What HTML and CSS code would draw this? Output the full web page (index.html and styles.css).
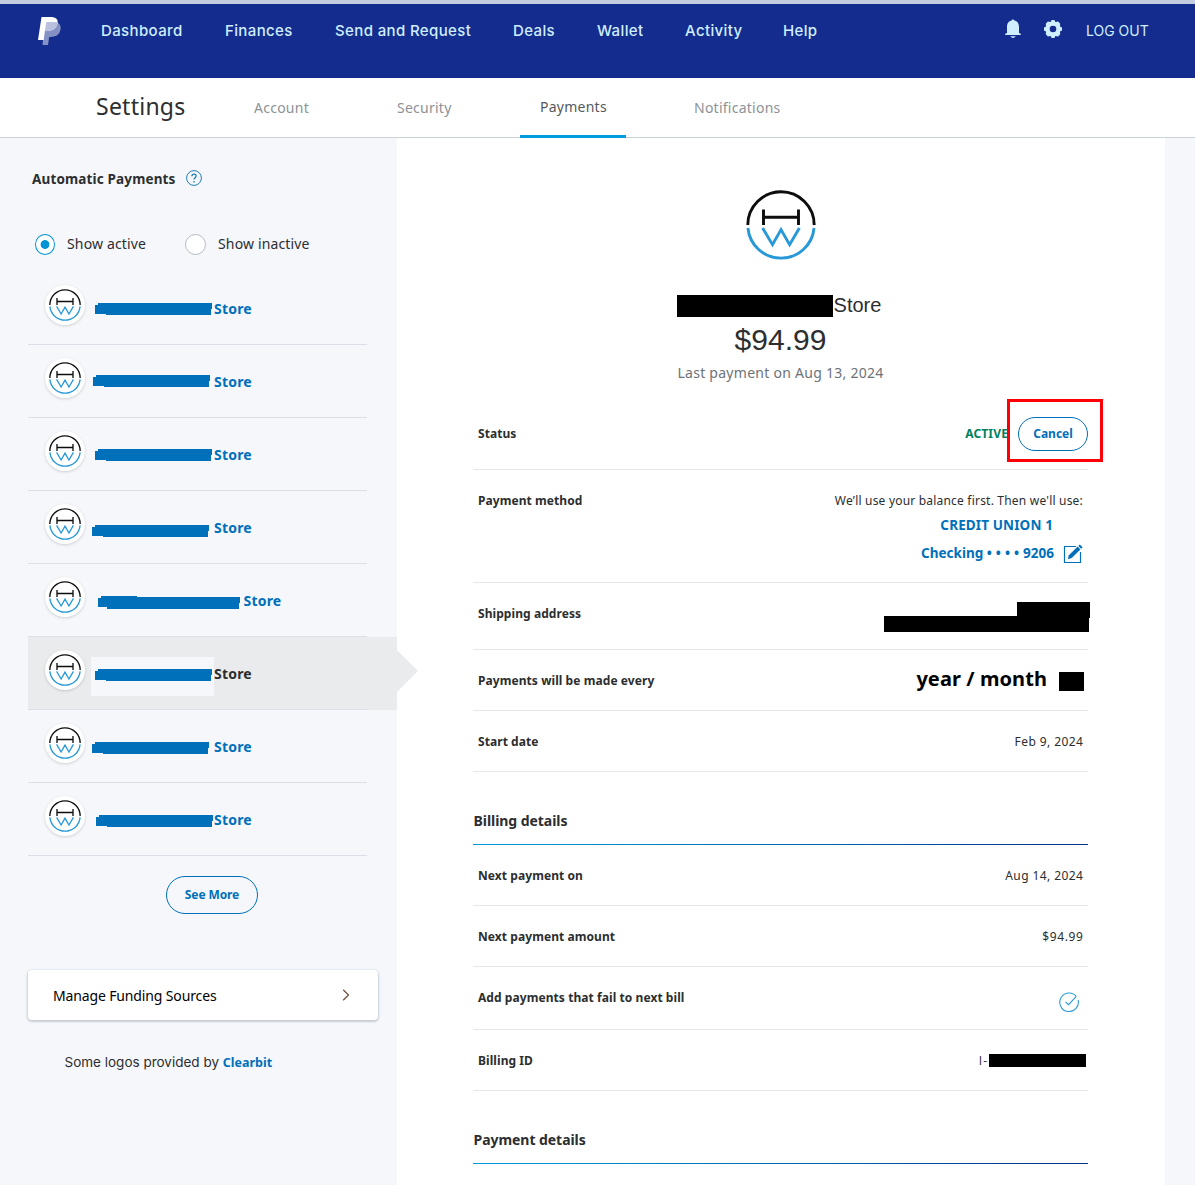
FILE: index.html
```
<!DOCTYPE html>
<html lang="en">
<head>
<meta charset="utf-8">
<title>Settings - Automatic Payments</title>
<link rel="stylesheet" href="styles.css">
</head>
<body>
<svg width="0" height="0" class="defs">
  <symbol id="hw" viewBox="0 0 70 70">
    <g fill="none" stroke-width="2.9">
      <path stroke="#0d0d0d" d="M1.800 35A33.200 33.200 0 0 1 68.200 35M17.500 19.500V35M52.500 19.500V35M17.500 27.300h35"/>
      <path stroke="#2798d8" d="M1.940 38A33.200 33.200 0 0 0 68.060 38M16.600 38l9.900 16.700L35 39.600l8.600 15.100L53.400 38"/>
    </g>
  </symbol>
</svg>

<header class="topbar">
  <svg class="brand" viewBox="0 0 23 28">
    <path fill="#8391c4" d="M6.500 5.500H19.200C22.600 7.500 23.300 10 22.200 13.700C21 18 17.600 19.900 12.500 19.900H11.200L10 28H4.500Z"/>
    <path fill="#fff" d="M3.500 0H12.300C18 0 20.600 2.600 19.500 6.600C18.200 12.200 14.500 14 9.300 14H6.900L5.700 23H0Z"/>
    <path fill="#b9c1df" d="M8.200 5H19.700C19.700 11 15 14 9.300 14H6.900Z"/>
  </svg>
  <nav class="main-nav">
    <a>Dashboard</a><a>Finances</a><a>Send and Request</a><a>Deals</a><a>Wallet</a><a>Activity</a><a>Help</a>
  </nav>
  <div class="tools">
    <svg class="bell" viewBox="0 0 16 20">
      <path fill="#cfefff" d="M7 1Q8-.5 9 1.200C12.600 2 14 4.600 14 8V14L15.800 14.800V16H.2V14.800L2 14V8C2 4.600 3.400 2 7 1.200Z"/>
      <path fill="#cfefff" d="M5.200 17.200h5.600Q8 20.800 5.200 17.200Z"/>
    </svg>
    <svg class="gear" viewBox="0 0 18 18">
      <path fill="#cfefff" fill-rule="evenodd" d="M7.600 0H10.400L11.400 1.900L14.200 1.600L16.200 3.700L16 6.600L18 7.600V10.400L16 11.400L16.200 14.300L14.200 16.400L11.400 16.100L10.400 18H7.600L6.600 16.100L3.800 16.400L1.800 14.300L2 11.400L0 10.400V7.600L2 6.600L1.800 3.700L3.800 1.600L6.600 1.900ZM9 5.700a3.300 3.300 0 1 0 0 6.600a3.300 3.300 0 0 0 0-6.600Z"/>
    </svg>
    <a class="logout">LOG OUT</a>
  </div>
</header>

<div class="subnav">
  <h1>Settings</h1>
  <a>Account</a>
  <a>Security</a>
  <a class="active">Payments</a>
  <a>Notifications</a>
</div>

<div class="page">
  <aside class="sidebar">
    <h2>Automatic Payments
      <svg class="help" viewBox="0 0 16 16"><g fill="none" stroke="#1f7eb3"><circle cx="8" cy="8" r="7.400"/><path stroke-width="1.300" d="M5.900 6.300C5.900 3.400 10.200 3.500 10.100 6C10 7.800 8 7.700 8 9.600M8 10.900v1.500"/></g></svg>
    </h2>
    <div class="filters">
      <label><span class="radio on"></span>Show active</label>
      <label><span class="radio"></span>Show inactive</label>
    </div>
    <ul class="merchants">
      <li><span class="avatar"><svg><use href="#hw"/></svg></span><i class="mask m1"></i><b>Store</b></li>
      <li><span class="avatar"><svg><use href="#hw"/></svg></span><i class="mask m2"></i><b>Store</b></li>
      <li><span class="avatar"><svg><use href="#hw"/></svg></span><i class="mask m1"></i><b>Store</b></li>
      <li><span class="avatar"><svg><use href="#hw"/></svg></span><i class="mask m4"></i><b>Store</b></li>
      <li class="long"><span class="avatar"><svg><use href="#hw"/></svg></span><i class="mask m5"></i><b>Store</b></li>
      <li class="selected"><span class="avatar"><svg><use href="#hw"/></svg></span><i class="patch"></i><i class="mask m6"></i><b>Store</b></li>
      <li><span class="avatar"><svg><use href="#hw"/></svg></span><i class="mask m7"></i><b>Store</b></li>
      <li><span class="avatar"><svg><use href="#hw"/></svg></span><i class="mask m8"></i><b>Store</b></li>
    </ul>
    <button class="pill see-more"><span>See More</span></button>
    <a class="funding"><span>Manage Funding Sources</span>
      <svg viewBox="0 0 8 12"><path d="M1.200.800L6.500 6L1.200 11.200" fill="none" stroke="#6b4d3c" stroke-width="1.200"/></svg>
    </a>
    <p class="credit"><span>Some logos provided by</span> <a>Clearbit</a></p>
  </aside>

  <main class="detail">
    <section class="summary">
      <svg class="big-logo"><use href="#hw"/></svg>
      <div class="name"><i></i>Store</div>
      <div class="amount">$94.99</div>
      <div class="last">Last payment on Aug 13, 2024</div>
    </section>
    <dl>
      <div class="row r-status"><dt>Status</dt><dd><span class="state">ACTIVE</span><button class="pill cancel"><span>Cancel</span></button><i class="highlight"></i></dd></div>
      <div class="row r-method"><dt>Payment method</dt>
        <dd>
          <span class="note">We’ll use your balance first. Then we'll use:</span>
          <a class="bank">CREDIT UNION 1</a>
          <div class="account"><a>Checking <span class="dots">••••</span>9206</a>
            <svg viewBox="0 0 20 20"><path d="M13 2.500H1.500V18.500H17.500V8" fill="none" stroke="#0070ba" stroke-width="1.200"/><path d="M4.800 15.200L5.900 11.300L14.600 2.600L17.400 5.400L8.700 14.100Z" fill="#0070ba"/><path d="M15.300 1.900L16.800.4L19.600 3.200L18.100 4.700Z" fill="#0070ba"/></svg>
          </div>
        </dd></div>
      <div class="row r-ship"><dt>Shipping address</dt><dd><i class="address"></i></dd></div>
      <div class="row"><dt>Payments will be made every</dt><dd class="cycle"><b>year / month</b><i></i></dd></div>
      <div class="row"><dt>Start date</dt><dd class="value">Feb 9, 2024</dd></div>
    </dl>
    <h3>Billing details</h3>
    <dl>
      <div class="row"><dt>Next payment on</dt><dd class="value">Aug 14, 2024</dd></div>
      <div class="row"><dt>Next payment amount</dt><dd class="value sum">$94.99</dd></div>
      <div class="row r-fail"><dt>Add payments that fail to next bill</dt><dd>
        <svg class="check" viewBox="0 0 20 20"><path d="M17.300 4.400A9.300 9.300 0 1 0 19.100 8M6.500 10L9.600 12.700L17.300 4.400" fill="none" stroke="#2f9bdb" stroke-width="1.100"/></svg></dd></div>
      <div class="row"><dt>Billing ID</dt><dd class="bill-id"><span>I-</span><i></i></dd></div>
    </dl>
    <h3>Payment details</h3>
  </main>
</div>
</body>
</html>
```
FILE: styles.css
```
* { box-sizing: border-box; }
body { margin: 0; width: 1195px; height: 1185px; overflow: hidden; background: #f5f7fb; color: #2c2e2f; font: 14px/20px "Noto Sans", sans-serif; }
h1, h2, h3, p, ul, dl, dd { margin: 0; padding: 0; }
a { color: inherit; text-decoration: none; white-space: nowrap; }
.defs { position: absolute; }

.topbar { height: 78px; border-top: 4px solid #c5cde1; background: #142c8e; display: flex; align-items: flex-start; padding: 13px 47px 0 38px; color: #cfefff; font-family: Inter, sans-serif; font-weight: 500; }
.brand { width: 23px; height: 28px; margin-right: 40px; }
.main-nav { display: grid; grid-template-columns: 124px 110px 178px 84px 88px 98px auto; font-size: 15px; line-height: 28px; letter-spacing: .37px; }
.tools { margin-left: auto; display: flex; align-items: flex-start; }
.bell { width: 16px; height: 20px; margin: 2px 23px 0 0; }
.gear { width: 18px; height: 18px; margin: 3px 24px 0 0; }
.logout { font-size: 14px; line-height: 27px; width: 62px; font-weight: 400; }

.subnav { height: 60px; background: #fff; border-bottom: 1px solid #cbd2d6; display: grid; grid-template-columns: 158px 143px 123px 174px auto; padding-left: 96px; line-height: 60px; font-size: 14px; color: #8c9297; letter-spacing: .25px; }
.subnav h1 { font-size: 23px; font-weight: 400; line-height: 57px; color: #2c2e2f; }
.subnav .active { width: 106px; height: 60px; padding-left: 20px; border-bottom: 3px solid #009cde; line-height: 58px; color: #55595c; }

.page { display: flex; height: 1047px; }
.sidebar { width: 397px; padding: 30px 0 0 28px; }
.sidebar h2 { font-size: 13.500px; line-height: 22px; padding-left: 4px; display: flex; align-items: center; gap: 10px; letter-spacing: .15px; }
.help { width: 16px; height: 16px; margin-top: -2px; }
.filters { display: flex; margin: 43px 0 17px 7px; height: 22px; letter-spacing: .15px; }
.filters label { display: flex; align-items: center; gap: 12px; width: 150px; white-space: nowrap; }
.radio { width: 21px; height: 21px; border: 1px solid #b5babd; border-radius: 50%; background: #fff; }
.radio.on { width: 20px; border-color: #0094d6; background: radial-gradient(circle, #0094d6 4px, #fff 4.800px); }

.merchants { list-style: none; }
.merchants li { position: relative; height: 73px; display: flex; align-items: flex-start; padding: 13px 0 0 17px; background: linear-gradient(#d9e1e6, #d9e1e6) 0 100% / 339px 1px no-repeat; color: #0070ba; }
.avatar { width: 40px; height: 40px; border-radius: 50%; background: #fff; box-shadow: 0 1px 3px rgba(0,0,0,.16); padding: 4px; margin-right: 129px; }
.avatar svg { display: block; width: 32px; height: 32px; }
.merchants b { margin-top: 14px; letter-spacing: .2px; }
.long .avatar { margin-right: 158.500px; }
.mask { position: absolute; width: 117px; height: 12px; background: #0070ba; clip-path: polygon(0 2px, 3px 2px, 3px 0, 117px 0, 117px 6px, 116px 6px, 116px 12px, 11px 12px, 11px 11px, 0 11px); }
.m1 { left: 67px; top: 31px; }
.m2 { left: 65px; top: 30px; }
.m4 { left: 64px; top: 34px; }
.m5 { left: 70px; top: 32px; width: 142px; height: 13px; clip-path: polygon(0 2px, 3px 2px, 3px 0, 39px 0, 39px 1px, 142px 1px, 142px 7px, 141px 7px, 141px 13px, 9px 13px, 9px 11px, 0 11px); }
.m6 { left: 67px; top: 32px; }
.m7 { left: 64px; top: 32px; }
.m8 { left: 68px; top: 32px; }
.merchants .selected { background-color: #eaebed; color: #2c2e2f; }
.selected::after { content: ""; position: absolute; left: 369px; top: 13px; width: 21px; height: 42px; background: #eaebed; clip-path: polygon(0 0, 100% 50%, 0 100%); }
.patch { position: absolute; left: 63px; top: 20px; width: 123px; height: 39px; background: #f5f7fb; }

.pill { display: block; padding: 0; border: 1px solid #0070ba; border-radius: 20px; background: none; color: #0070ba; font: bold 12px/16px "Noto Sans", sans-serif; }
.see-more { width: 92px; height: 38px; margin: 20px 0 0 138px; }
.see-more span { letter-spacing: -.1px; }
.funding { display: flex; align-items: center; justify-content: space-between; width: 350px; height: 50px; margin-top: 56px; padding: 2px 28px 0 25px; background: #fff; border-radius: 4px; box-shadow: 0 1px 2px 1px #c6ced4; color: #000; letter-spacing: -.14px; }
.funding svg { width: 8px; height: 12px; margin-top: -3px; }
.credit { margin: 32px 0 0 36.500px; white-space: nowrap; font-family: Inter, sans-serif; font-size: 13.500px; }
.credit a { color: #0070ba; font: bold 12.500px "Noto Sans", sans-serif; }

.detail { width: 768px; padding: 0 77px 0 76px; background: #fff; }
.summary { height: 265px; padding-top: 52px; display: flex; flex-direction: column; align-items: center; }
.big-logo { width: 70px; height: 70px; }
.name { display: flex; align-items: center; height: 26px; margin-top: 32px; margin-right: 3px; font: 20px/26px "Liberation Sans", sans-serif; gap: 1px; }
.name i { width: 156px; height: 22px; background: #000; margin-top: 2px; }
.amount { font: 30px/36px "Liberation Sans", sans-serif; margin-top: 4px; }
.last { margin-top: 3px; line-height: 24px; color: #6c7378; letter-spacing: .27px; }

.row { display: flex; justify-content: space-between; height: 61px; padding: 21px 5px 0; border-bottom: 1px solid #e6e9eb; font-size: 12px; }
dt { font-weight: 700; white-space: nowrap; letter-spacing: .07px; }
dd { white-space: nowrap; }
.value { letter-spacing: .42px; margin-right: -.4px; }
.sum { letter-spacing: .6px; }
.r-status { height: 67px; padding: 14px 0 0 5px; }
.r-status dt { margin-top: 7px; }
.r-status dd { position: relative; display: flex; }
.state { color: #00805c; font-weight: 700; margin: 7px 10px 0 0; letter-spacing: .15px; }
.cancel { width: 70px; height: 34px; }
.highlight { position: absolute; right: -15px; top: -18px; width: 96px; height: 63px; border: 3px solid #fc0006; }
.r-method { height: 113px; }
.r-method dd { display: flex; flex-direction: column; align-items: flex-end; }
.note { letter-spacing: .2px; }
.bank, .account { color: #0070ba; font-weight: 700; font-size: 13.500px; }
.bank { margin: 4px 30px 0 0; letter-spacing: .13px; }
.account { display: flex; margin-top: 8px; gap: 9px; }
.account svg { width: 20px; height: 20px; margin-top: 1px; }
.dots { letter-spacing: 4px; }
.r-ship { height: 67px; padding: 19px 0 0 5px; }
.r-ship dt { margin-top: 2px; }
.address { display: block; width: 206px; height: 30px; margin-right: -2px; background: #000; clip-path: polygon(133px 0, 206px 0, 206px 16px, 205px 16px, 205px 30px, 0 30px, 0 14px, 133px 14px); }
.cycle { display: flex; color: #000; margin-right: -1px; }
.cycle b { font-size: 20px; line-height: 20px; margin-top: -2px; letter-spacing: .08px; }
.cycle i { width: 25px; height: 19px; margin: 1px 0 0 12px; background: #000; }
.detail h3 { height: 73px; padding: 39px 0 0 .5px; font-size: 14px; letter-spacing: -.05px; background: linear-gradient(90deg, #009cde, #0070ba 45%, #003087) 0 100% / 100% 1px no-repeat; }
.r-fail { height: 63px; }
.check { width: 20px; height: 20px; margin: 4px 4px 0 0; }
.bill-id { display: flex; margin-right: -3px; }
.bill-id span { font-family: "Open Sans", sans-serif; letter-spacing: 1px; }
.bill-id i { width: 97px; height: 13px; margin: 3px 0 0 1px; background: #000; }
```
